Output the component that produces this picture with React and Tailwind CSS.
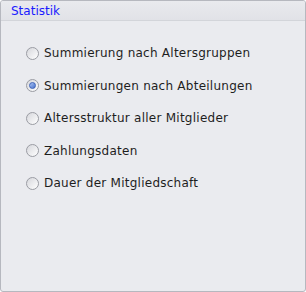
const options = [
  "Summierung nach Altersgruppen",
  "Summierungen nach Abteilungen",
  "Altersstruktur aller Mitglieder",
  "Zahlungsdaten",
  "Dauer der Mitgliedschaft",
];

function Radio({ checked }) {
  return (
    <span className="relative flex h-[13px] w-[13px] shrink-0 items-center justify-center rounded-full border border-[#9a9ca3] bg-gradient-to-br from-[#d6d7dc] to-[#ffffff]">
      {checked ? (
        <span className="h-[7px] w-[7px] rounded-full border border-[#3d62b8] bg-gradient-to-br from-[#a9c2f3] to-[#4a73cc]" />
      ) : null}
    </span>
  );
}

export default function App() {
  return (
    <div className="h-[292px] w-[306px] bg-white font-['DejaVu_Sans',sans-serif]">
      <div className="flex h-full flex-col overflow-hidden rounded-[3px] border border-[#b6b8bf] bg-[#eaebef]">
        <div className="flex h-[20px] items-center border-b border-[#d3d5da] bg-gradient-to-b from-[#e9eaee] to-[#e1e2e7] pl-[10px] text-[12px] text-[#1a1aff]">
          Statistik
        </div>
        <div className="flex flex-col gap-[12.5px] pl-[25px] pt-[22px]">
          {options.map((label, i) => (
            <label key={label} className="flex h-[20px] items-center gap-[5px] text-[12px] tracking-[0.25px] text-[#1e1e1e]">
              <Radio checked={i === 1} />
              <span>{label}</span>
            </label>
          ))}
        </div>
      </div>
    </div>
  );
}
